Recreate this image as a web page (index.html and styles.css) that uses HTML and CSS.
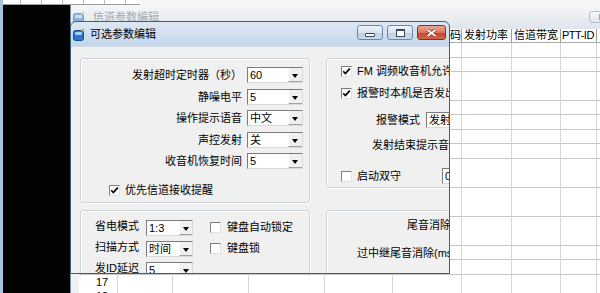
FILE: index.html
```html
<!DOCTYPE html>
<html lang="zh-CN">

<head>
    <meta charset="UTF-8">
    <title>可选参数编辑</title>
    <link rel="stylesheet" href="styles.css">
</head>

<body>
    <div class="desk">
        <div class="sheet-strip"></div>
        <div class="side-line"></div>
        <div class="dark-pane"></div>

        <!-- window behind: channel table -->
        <div class="win back-win">
            <div class="back-title">
                <svg class="app-icon faded" width="12" height="13" viewBox="0 0 12 13">
                    <rect x="0.5" y="2.5" width="10" height="10" rx="2" fill="#4a86cf" stroke="#28578f" />
                    <rect x="2" y="4" width="7" height="3" rx="1" fill="#a9d3fb" />
                    <path d="M8.5 3.2 L11 0.6" stroke="#b7c94a" stroke-width="1.4" />
                </svg>
                <span class="ttl">信道参数编辑</span>
                <span class="back-btn"><i></i></span>
            </div>
            <div class="back-body">
                <div class="grid">
                    <!-- columns left of the dialog are hidden behind it -->
                    <div class="ghead">
                        <div></div>
                        <div></div>
                        <div></div>
                        <div></div>
                        <div></div>
                        <div>亚音频数字码</div>
                        <div>发射功率</div>
                        <div>信道带宽</div>
                        <div class="tight">PTT-ID</div>
                        <div></div>
                    </div>
                    <div class="gbody">
                        <div class="gcol nums">
                            <span></span><span></span><span></span><span></span><span></span><span></span>
                            <span></span><span></span><span></span><span></span><span></span><span></span>
                            <span></span><span></span><span></span><span></span><span>17</span><span>18</span>
                        </div>
                        <div class="gcol"></div>
                        <div class="gcol"></div>
                        <div class="gcol"></div>
                        <div class="gcol"></div>
                        <div class="gcol"></div>
                        <div class="gcol"></div>
                        <div class="gcol"></div>
                        <div class="gcol"></div>
                        <div class="gcol"></div>
                    </div>
                </div>
            </div>
        </div>

        <!-- active dialog -->
        <div class="win dlg">
            <div class="dlg-title">
                <svg class="app-icon" width="12" height="13" viewBox="0 0 12 13">
                    <rect x="0.5" y="2.5" width="10" height="10" rx="2" fill="#2f74cc" stroke="#1b4c8c" />
                    <rect x="2" y="4" width="7" height="3" rx="1" fill="#9fd0ff" />
                    <path d="M8.5 3.2 L11 0.6" stroke="#9cc72f" stroke-width="1.4" />
                </svg>
                <span class="ttl">可选参数编辑</span>
                <div class="tbtns">
                    <span class="tbtn"><i class="ico-min"></i></span>
                    <span class="tbtn"><i class="ico-max"></i></span>
                    <span class="tbtn close">
                        <svg width="11" height="8" viewBox="0 0 11 8">
                            <path d="M1.5 1 L9.5 7 M9.5 1 L1.5 7" stroke="#7a2a1c" stroke-width="3.2" />
                            <path d="M1.5 1 L9.5 7 M9.5 1 L1.5 7" stroke="#fff" stroke-width="1.8" />
                        </svg>
                    </span>
                </div>
            </div>

            <div class="dlg-client">
                <div class="grp timers">
                    <div class="rows">
                        <span class="lbl">发射超时定时器（秒）</span>
                        <div class="combo"><span class="val">60</span><span class="drop"></span></div>
                        <span class="lbl">静噪电平</span>
                        <div class="combo"><span class="val">5</span><span class="drop"></span></div>
                        <span class="lbl">操作提示语音</span>
                        <div class="combo"><span class="val">中文</span><span class="drop"></span></div>
                        <span class="lbl">声控发射</span>
                        <div class="combo"><span class="val">关</span><span class="drop"></span></div>
                        <span class="lbl">收音机恢复时间</span>
                        <div class="combo"><span class="val">5</span><span class="drop"></span></div>
                    </div>
                    <label class="check prio">
                        <span class="chk on"><svg width="9" height="9" viewBox="0 0 9 9"><path d="M1.2 4.2 L3.4 6.6 L7.8 1.6" fill="none" stroke="#000" stroke-width="1.7" /></svg></span>
                        优先信道接收提醒
                    </label>
                </div>

                <div class="grp alarm">
                    <label class="check row-a">
                        <span class="chk on"><svg width="9" height="9" viewBox="0 0 9 9"><path d="M1.2 4.2 L3.4 6.6 L7.8 1.6" fill="none" stroke="#000" stroke-width="1.7" /></svg></span>
                        FM 调频收音机允许使用
                    </label>
                    <label class="check row-b">
                        <span class="chk on"><svg width="9" height="9" viewBox="0 0 9 9"><path d="M1.2 4.2 L3.4 6.6 L7.8 1.6" fill="none" stroke="#000" stroke-width="1.7" /></svg></span>
                        报警时本机是否发出报警音
                    </label>
                    <div class="row-mode">
                        <span class="lbl">报警模式</span>
                        <div class="combo wide"><span class="val">发射报警</span><span class="drop"></span></div>
                    </div>
                    <div class="row-tone">发射结束提示音</div>
                    <div class="row-dual">
                        <label class="check">
                            <span class="chk"></span>
                            启动双守
                        </label>
                        <span class="field">0</span>
                    </div>
                </div>

                <div class="grp power">
                    <div class="rows">
                        <span class="lbl">省电模式</span>
                        <div class="combo small"><span class="val">1:3</span><span class="drop"></span></div>
                        <span class="lbl">扫描方式</span>
                        <div class="combo small"><span class="val">时间</span><span class="drop"></span></div>
                        <span class="lbl">发ID延迟</span>
                        <div class="combo small"><span class="val">5</span><span class="drop"></span></div>
                    </div>
                    <div class="checks">
                        <label class="check"><span class="chk"></span>键盘自动锁定</label>
                        <label class="check"><span class="chk"></span>键盘锁</label>
                    </div>
                </div>

                <div class="grp tail">
                    <div class="tail-a">尾音消除</div>
                    <div class="tail-b">过中继尾音消除(ms)</div>
                </div>
            </div>
        </div>
    </div>
</body>

</html>
```

FILE: styles.css
```css
* {
    box-sizing: border-box;
}

body {
    margin: 0;
    font-family: "Liberation Sans", "Noto Sans CJK SC", sans-serif;
    font-size: 11px;
    color: #000000;
}

.desk {
    position: relative;
    width: 600px;
    height: 293px;
    overflow: hidden;
    background-color: #f8f5f5;
}

/* bits of other windows around the edges */
.sheet-strip {
    position: absolute;
    left: 0;
    top: 0;
    width: 140px;
    height: 5px;
    background: repeating-linear-gradient(90deg, #ffffff 0, #ffffff 20px, #b8b8b8 20px, #b8b8b8 21px);
    border-bottom: 1px solid #9c9c9c;
}

.side-line {
    position: absolute;
    left: 0;
    top: 0;
    width: 3px;
    height: 293px;
    background-color: #a9c3e2;
}

.dark-pane {
    position: absolute;
    left: 3px;
    top: 5px;
    width: 67px;
    height: 288px;
    background-color: #030303;
}

.win {
    position: absolute;
}

/* back window */
.back-win {
    left: 70px;
    top: 5px;
    width: 560px;
    height: 300px;
    background-color: #eef1f5;
    border-left: 1px solid #7d909e;
}

.back-title {
    height: 24px;
    display: flex;
    align-items: center;
    padding: 0 15px 0 2px;
    background: linear-gradient(#f5f6f8, #dfe5ec);
    color: #a2aab4;
}

.back-title .ttl {
    margin-left: 8px;
    line-height: 14px;
}

.app-icon {
    display: block;
    flex: none;
}

.app-icon.faded {
    opacity: 0.55;
}

.back-btn {
    margin-left: auto;
    width: 26px;
    height: 12px;
    border: 1px solid #b3bfcc;
    border-radius: 3px;
    background: linear-gradient(#f7f8fa, #e1e6ec);
    display: flex;
    align-items: center;
    justify-content: center;
}

.back-btn i {
    width: 7px;
    height: 6px;
    border: 1px solid #9aa4b0;
    border-top-width: 2px;
}

.back-body {
    display: flex;
    padding-left: 8px;
}

.grid {
    background-color: #ffffff;
}

.ghead {
    display: flex;
    height: 13.5px;
}

.ghead div {
    flex: none;
    border-right: 1px solid #9b9b9b;
    border-bottom: 1px solid #a8a8a8;
    padding-left: 2px;
    line-height: 12.5px;
    white-space: nowrap;
    overflow: hidden;
}

.ghead .tight {
    padding-left: 1px;
    letter-spacing: -0.5px;
}

.gbody {
    display: flex;
}

.gcol {
    flex: none;
    height: 270px;
    border-right: 1px solid #d6d6d6;
    background: repeating-linear-gradient(180deg, transparent 0, transparent 13.5px, #c6c6c6 13.5px, #c6c6c6 14.5px);
}

.ghead > :nth-child(1), .gbody > :nth-child(1) { width: 39px; }
.ghead > :nth-child(2), .gbody > :nth-child(2) { width: 55px; }
.ghead > :nth-child(3), .gbody > :nth-child(3) { width: 76px; }
.ghead > :nth-child(4), .gbody > :nth-child(4) { width: 76px; }
.ghead > :nth-child(5), .gbody > :nth-child(5) { width: 68px; }
.ghead > :nth-child(6), .gbody > :nth-child(6) { width: 69px; }
.ghead > :nth-child(7), .gbody > :nth-child(7) { width: 50px; }
.ghead > :nth-child(8), .gbody > :nth-child(8) { width: 49px; }
.ghead > :nth-child(9), .gbody > :nth-child(9) { width: 36px; }
.ghead > :nth-child(10), .gbody > :nth-child(10) { width: 60px; }

.nums span {
    display: block;
    height: 14.5px;
    line-height: 14px;
    padding-left: 17px;
}

/* dialog */
.dlg {
    left: 70px;
    top: 21px;
    width: 380px;
    height: 253px;
    border: 1px solid #35647a;
    border-radius: 6px 6px 0 0;
    background: linear-gradient(#dee8f4, #c4d6ea 24px);
    overflow: hidden;
}

.dlg-title {
    height: 24px;
    display: flex;
    align-items: center;
    padding: 0 3px 0 2px;
}

.dlg-title .ttl {
    margin-left: 5px;
    line-height: 14px;
}

.tbtns {
    margin-left: auto;
    align-self: flex-start;
    margin-top: 3px;
    display: flex;
    gap: 4px;
}

.tbtn {
    width: 26px;
    height: 15px;
    border: 1px solid #6d88a6;
    border-radius: 3px;
    background: linear-gradient(#f0f5fa, #d6e2ef 50%, #bccee3 51%, #cadaeb);
    display: flex;
    align-items: center;
    justify-content: center;
}

.tbtn.close {
    width: 29px;
    border-color: #85301f;
    background: linear-gradient(#eaa898, #d9735e 50%, #c6432b 51%, #d4644c);
}

.ico-min {
    width: 10px;
    height: 4px;
    margin-top: 5px;
    border: 1px solid #3b4a5a;
    border-radius: 1px;
    background-color: #ffffff;
}

.ico-max {
    width: 9px;
    height: 8px;
    border: 1px solid #3b4a5a;
    border-top-width: 2px;
    background-color: #ffffff;
}

.dlg-client {
    height: 228px;
    border-top: 1px solid #d2dce8;
    background-color: #f0f0f0;
    padding: 11px 0 0 9px;
    display: grid;
    grid-template-columns: 230px 230px;
    grid-template-rows: 145px 90px;
    column-gap: 16px;
    row-gap: 7px;
}

.grp {
    border: 1px solid #cdd4db;
    border-radius: 3px;
    box-shadow: inset 1px 1px 0 #ffffff, 1px 1px 0 #ffffff;
    white-space: nowrap;
}

.lbl {
    white-space: nowrap;
}

/* combo box */
.combo {
    display: flex;
    height: 16px;
    border: 1px solid;
    border-color: #7c7c7c #dadada #dadada #7c7c7c;
    background-color: #ffffff;
}

.combo .val {
    flex: 1;
    padding-left: 2px;
    line-height: 14px;
    overflow: hidden;
}

.combo .drop {
    position: relative;
    width: 14px;
    flex: none;
    background-color: #f0f0f0;
    border-left: 1px solid #ffffff;
    border-bottom: 1px solid #a0a0a0;
}

.combo .drop::after {
    content: "";
    position: absolute;
    left: 3px;
    top: 6px;
    border-left: 3.5px solid transparent;
    border-right: 3.5px solid transparent;
    border-top: 4px solid #000000;
}

.combo.small {
    width: 47px;
}

.combo.small .drop {
    width: 13px;
}

.combo.wide {
    width: 56px;
}

/* check box */
.check {
    display: flex;
    align-items: center;
    gap: 5px;
    height: 14px;
    line-height: 14px;
    white-space: nowrap;
}

.chk {
    width: 11px;
    height: 11px;
    flex: none;
    border: 1px solid;
    border-color: #7f7f7f #e2e2e2 #e2e2e2 #7f7f7f;
    background-color: #ffffff;
    display: flex;
    align-items: center;
    justify-content: center;
}

.chk svg {
    display: block;
}

/* left top group */
.timers {
    padding-top: 8px;
}

.timers .rows {
    display: grid;
    grid-template-columns: 161px 56px;
    column-gap: 5px;
    row-gap: 5.5px;
}

.timers .lbl {
    text-align: right;
    line-height: 16px;
}

.prio {
    margin-top: 14px;
    padding-left: 28px;
}

/* right top group */
.alarm {
    align-self: start;
    height: 130px;
    padding: 5px 0 0 14px;
}

.row-b {
    margin-top: 8px;
}

.row-mode {
    display: flex;
    align-items: center;
    gap: 6px;
    margin-top: 12px;
    padding-left: 35px;
}

.row-mode .lbl {
    line-height: 14px;
}

.row-tone {
    margin-top: 10px;
    padding-left: 31px;
    height: 14px;
    line-height: 14px;
}

.row-dual {
    display: flex;
    align-items: center;
    margin-top: 16px;
    height: 16px;
}

.field {
    margin-left: 41px;
    width: 40px;
    height: 16px;
    border: 1px solid;
    border-color: #7c7c7c #dadada #dadada #7c7c7c;
    background-color: #ffffff;
    padding-left: 2px;
    line-height: 14px;
}

/* left bottom group */
.power {
    display: flex;
    align-items: flex-start;
    padding: 9px 0 0 14px;
}

.power .rows {
    display: grid;
    grid-template-columns: 44px 47px;
    column-gap: 7px;
    row-gap: 5px;
}

.power .lbl {
    line-height: 13px;
}

.checks {
    margin-left: 17px;
    display: flex;
    flex-direction: column;
    gap: 7px;
}

.checks .check {
    gap: 6px;
}

/* right bottom group */
.tail {
    padding-top: 7px;
}

.tail-a {
    padding-left: 80px;
    height: 14px;
    line-height: 14px;
}

.tail-b {
    margin-top: 14px;
    padding-left: 30px;
    height: 14px;
    line-height: 14px;
}
```
